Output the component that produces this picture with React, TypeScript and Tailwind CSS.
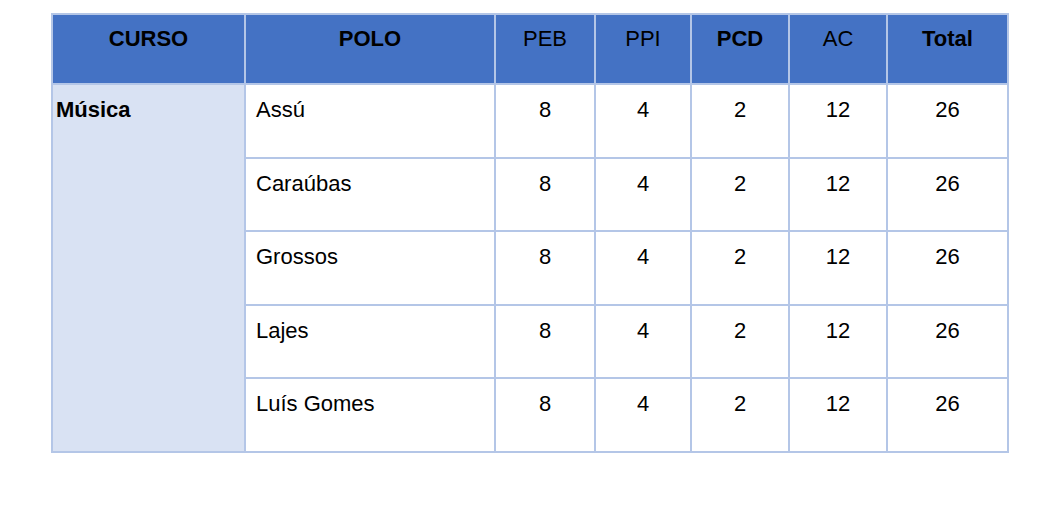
const headers = [
  { label: "CURSO", bold: true, w: "w-[193px]" },
  { label: "POLO", bold: true, w: "w-[250px]" },
  { label: "PEB", bold: false, w: "w-[100px]" },
  { label: "PPI", bold: false, w: "w-[96px]" },
  { label: "PCD", bold: true, w: "w-[98px]" },
  { label: "AC", bold: false, w: "w-[98px]" },
  { label: "Total", bold: true, w: "w-[121px]" },
];

const polos = ["Assú", "Caraúbas", "Grossos", "Lajes", "Luís Gomes"];

const App = () => {
  return (
    <div className="w-[1050px] h-[525px] bg-white pt-[13px] pl-[51px] font-['Liberation_Sans',Arial,sans-serif] text-[22px] leading-[25px] text-black">
      <table className="border-collapse table-fixed w-[957px]">
        <thead>
          <tr className="h-[70px]">
            {headers.map((h) => (
              <th
                key={h.label}
                className={`${h.w} ${h.bold ? "font-bold" : "font-normal"} bg-[#4472c4] border-2 border-[#b4c6e7] align-top pt-[11px] text-center`}
              >
                {h.label}
              </th>
            ))}
          </tr>
        </thead>
        <tbody>
          {polos.map((polo, i) => (
            <tr key={polo} className="h-[73.6px]">
              {i === 0 && (
                <td
                  rowSpan={polos.length}
                  className="bg-[#d9e2f3] border-2 border-[#b4c6e7] align-top pt-[12px] pl-[3px] font-bold"
                >
                  Música
                </td>
              )}
              <td className="border-2 border-[#b4c6e7] align-top pt-[12px] pl-[10px]">{polo}</td>
              <td className="border-2 border-[#b4c6e7] align-top pt-[12px] text-center">8</td>
              <td className="border-2 border-[#b4c6e7] align-top pt-[12px] text-center">4</td>
              <td className="border-2 border-[#b4c6e7] align-top pt-[12px] text-center">2</td>
              <td className="border-2 border-[#b4c6e7] align-top pt-[12px] text-center">12</td>
              <td className="border-2 border-[#b4c6e7] align-top pt-[12px] text-center">26</td>
            </tr>
          ))}
        </tbody>
      </table>
    </div>
  );
};

export default App;
